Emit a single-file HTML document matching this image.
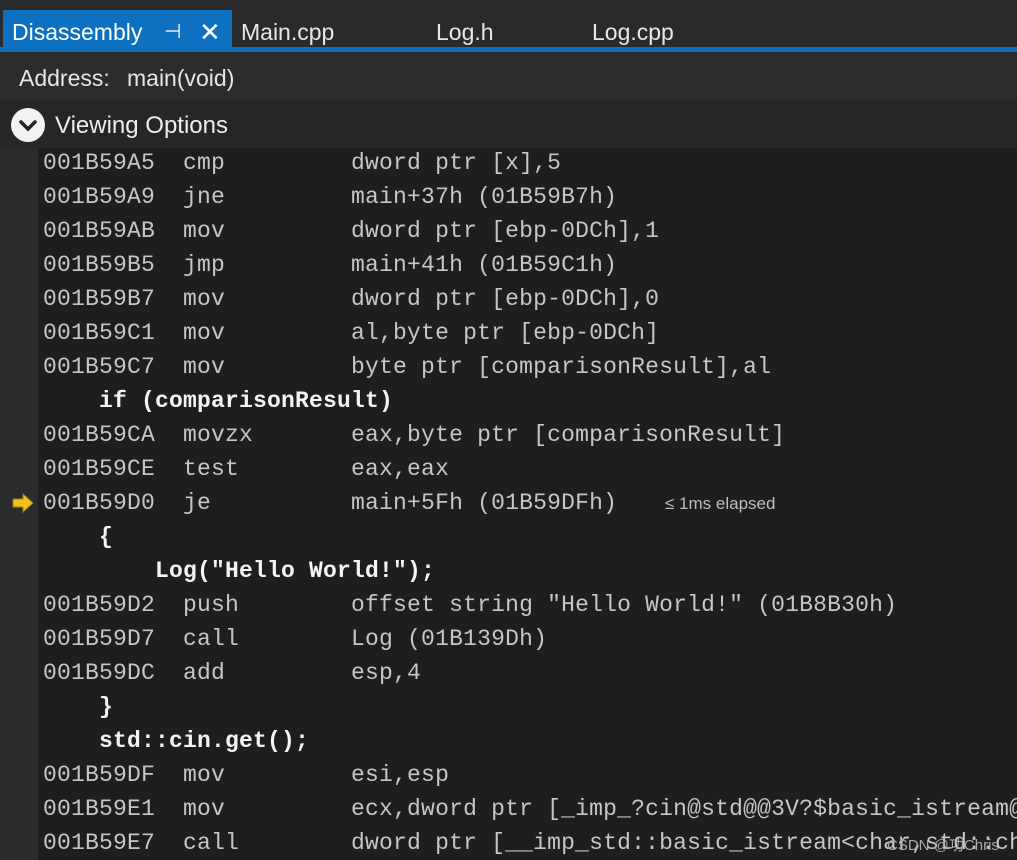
<!DOCTYPE html>
<html><head><meta charset="utf-8"><style>
*{margin:0;padding:0;box-sizing:border-box}
body{width:1017px;height:860px;background:#1e1e1e;overflow:hidden;position:relative;font-family:"Liberation Sans",sans-serif}
.top{position:absolute;left:0;top:0;width:1017px;height:48px;background:#2a2a2c}
.tab{position:absolute;top:10px;height:40px;font-size:23px;color:#e8e8e8;line-height:44px}
.active{left:3px;width:229px;background:#0e70c0;padding-left:9px;color:#fff}
.strip{position:absolute;left:0;top:47px;width:1017px;height:5px;background:#0e70c0}
.addr{position:absolute;left:0;top:52px;width:1017px;height:48px;background:#2c2c2f}
.field{position:absolute;left:120px;top:58px;width:897px;height:38px;background:#333337}
.addr span{position:absolute;top:13px;font-size:23px;color:#e6e6e6}
.vo{position:absolute;left:0;top:100px;width:1017px;height:48px;background:#262628}
.circ{position:absolute;left:11px;top:108px;width:34px;height:34px;border-radius:50%;background:#f2f2f2}
.gutter{position:absolute;left:0;top:148px;width:38px;height:712px;background:#2b2b2d}
pre{position:absolute;left:43px;top:146px;font-family:"Liberation Mono",monospace;font-size:23px;letter-spacing:0.2px;line-height:34px;color:#c6c6c6}
pre b{color:#f4f4f4;font-weight:bold}
.el{position:absolute;left:665px;top:494px;font-size:17px;color:#bdbdbd}
.arrow{position:absolute;left:11px;top:493px}
.wm{position:absolute;left:887px;top:834px;font-size:15px;color:#aaa}
</style></head><body>
<div class="top"></div>
<div class="tab active">Disassembly <span style="position:absolute;left:161px;font-size:20px">⊣</span><span style="position:absolute;left:196px;font-size:26px">✕</span></div>
<div class="tab" style="left:241px">Main.cpp</div>
<div class="tab" style="left:436px">Log.h</div>
<div class="tab" style="left:592px">Log.cpp</div>
<div class="strip"></div>
<div class="addr"><div class="field"></div><span style="left:19px">Address:</span><span style="left:127px">main(void)</span></div>
<div class="vo"><span style="position:absolute;left:55px;top:12px;font-size:24px;color:#eee">Viewing Options</span></div>
<div class="circ"><svg width="34" height="34"><path d="M10 14 L17 21 L24 14" stroke="#222" stroke-width="3.5" fill="none" stroke-linecap="round"/></svg></div>
<div class="gutter"></div>
<pre>001B59A5  cmp         dword ptr [x],5
001B59A9  jne         main+37h (01B59B7h)
001B59AB  mov         dword ptr [ebp-0DCh],1
001B59B5  jmp         main+41h (01B59C1h)
001B59B7  mov         dword ptr [ebp-0DCh],0
001B59C1  mov         al,byte ptr [ebp-0DCh]
001B59C7  mov         byte ptr [comparisonResult],al
<b>    if (comparisonResult)</b>
001B59CA  movzx       eax,byte ptr [comparisonResult]
001B59CE  test        eax,eax
001B59D0  je          main+5Fh (01B59DFh)
<b>    {</b>
<b>        Log("Hello World!");</b>
001B59D2  push        offset string "Hello World!" (01B8B30h)
001B59D7  call        Log (01B139Dh)
001B59DC  add         esp,4
<b>    }</b>
<b>    std::cin.get();</b>
001B59DF  mov         esi,esp
001B59E1  mov         ecx,dword ptr [_imp_?cin@std@@3V?$basic_istream@
001B59E7  call        dword ptr [__imp_std::basic_istream&lt;char,std::ch</pre>
<svg class="arrow" width="24" height="20"><path d="M2 6 H12 V1 L22 10 L12 19 V14 H2 Z" fill="#f0c419" stroke="#a08010" stroke-width="1"/></svg>
<div class="el">≤ 1ms elapsed</div>
<div class="wm">CSDN @功Chris</div>
</body></html>
